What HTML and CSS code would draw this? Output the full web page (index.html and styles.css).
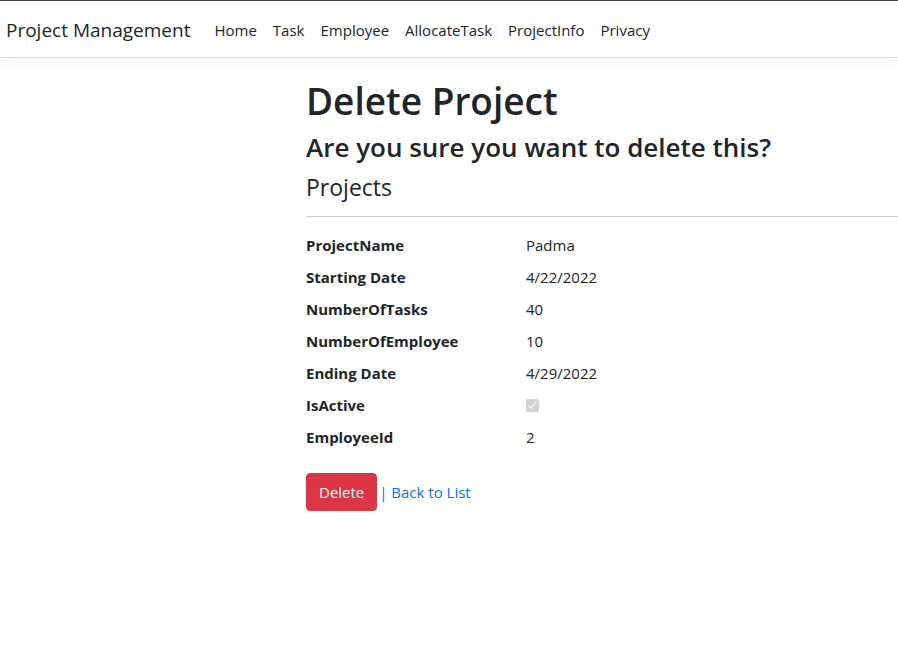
FILE: index.html
```html
<!DOCTYPE html>
<html lang="en">
<head>
<meta charset="utf-8">
<title>Delete - Project Management</title>
<link rel="stylesheet" href="styles.css">
</head>
<body>
<header class="topbar">
  <nav class="navbar">
    <a class="brand" href="#">Project Management</a>
    <ul class="nav">
      <li><a href="#">Home</a></li>
      <li><a href="#">Task</a></li>
      <li><a href="#">Employee</a></li>
      <li><a href="#">AllocateTask</a></li>
      <li><a href="#">ProjectInfo</a></li>
      <li><a href="#">Privacy</a></li>
    </ul>
  </nav>
</header>
<main class="main">
  <h1 class="title">Delete Project</h1>
  <h3 class="question">Are you sure you want to delete this?</h3>
  <div class="details">
    <h4 class="section">Projects</h4>
    <hr class="rule">
    <dl class="grid">
      <dt>ProjectName</dt><dd>Padma</dd>
      <dt>Starting Date</dt><dd>4/22/2022</dd>
      <dt>NumberOfTasks</dt><dd>40</dd>
      <dt>NumberOfEmployee</dt><dd>10</dd>
      <dt>Ending Date</dt><dd>4/29/2022</dd>
      <dt>IsActive</dt><dd><input class="check" type="checkbox" checked disabled></dd>
      <dt>EmployeeId</dt><dd>2</dd>
    </dl>
    <form class="actions">
      <button type="button" class="btn-danger">Delete</button> | <a href="#" class="link">Back to List</a>
    </form>
  </div>
</main>
</body>
</html>
```
FILE: styles.css
```css
* { box-sizing: border-box; }
html, body { margin: 0; padding: 0; }
body {
  font-family: "Open Sans", "Noto Sans", sans-serif;
  font-size: 15px;
  line-height: 24px;
  color: #212529;
  background: #fff;
  width: 898px;
  overflow: hidden;
}
.topbar {
  border-top: 1px solid #444;
  border-bottom: 1px solid #dee2e6;
  box-shadow: 0 4px 12px rgba(0,0,0,.05);
  margin-bottom: 16px;
}
.navbar {
  display: flex;
  align-items: center;
  height: 56px;
  padding: 1px 0 0 6px;
}
.brand {
  font-size: 19px;
  color: #212529;
  text-decoration: none;
  margin-right: 16px;
}
.nav {
  display: flex;
  list-style: none;
  margin: 0;
  padding: 0;
}
.nav a {
  display: block;
  padding: 8px;
  color: #212529;
  text-decoration: none;
  font-size: 15px;
}
.main {
  padding: 5px 0 0 306px;
}
.title, .question, .section {
  margin: 0 0 8px;
  line-height: 1.2;
}
.title { font-size: 37px; font-weight: 600; margin-bottom: 9px; }
.question { font-size: 26px; font-weight: 600; margin-bottom: 10px; }
.section { font-size: 23px; font-weight: 400; }
.rule {
  margin: 15px 0 16px;
  border: 0;
  border-top: 1px solid #c8c8c8;
}
.grid {
  display: grid;
  grid-template-columns: 220px 1fr;
  margin: 0 0 16px;
}
.grid dt { font-weight: 700; margin-bottom: 8px; }
.grid dd { margin: 0 0 8px; }
.check { margin: 0; width: 13px; height: 13px; vertical-align: -1px; }
.actions { margin: 0; color: #0d6efd; }
.btn-danger {
  font-family: inherit;
  font-size: 15px;
  line-height: 24px;
  color: #fff;
  background: #dc3545;
  border: 1px solid #dc3545;
  border-radius: 4px;
  padding: 6px 12px;
  margin-right: -2px;
}
.link { color: #0d6efd; text-decoration: none; }
```
